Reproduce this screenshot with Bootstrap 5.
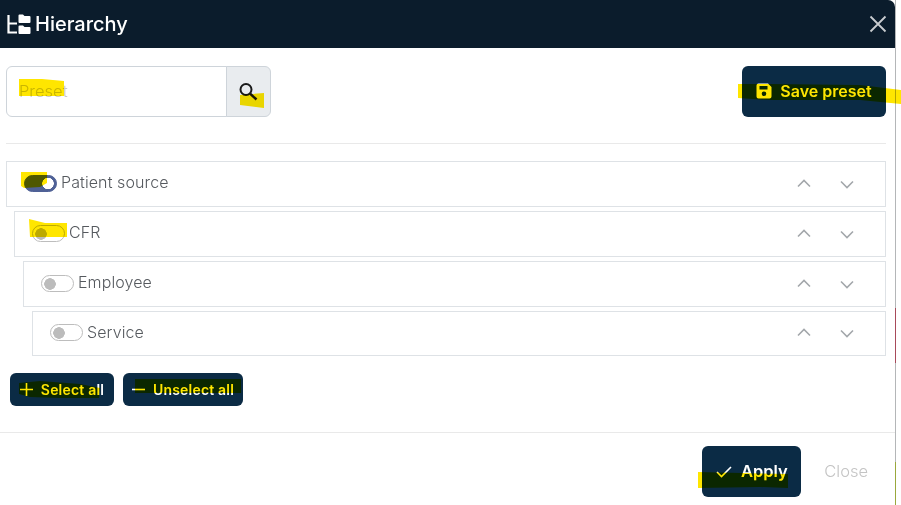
<!DOCTYPE html>
<html lang="en">
<head>
  <title>Hierarchy</title>
  <meta charset="utf-8">
  <meta name="viewport" content="width=device-width, initial-scale=1">
  <link href="https://cdn.jsdelivr.net/npm/bootstrap@5.3.3/dist/css/bootstrap.min.css" rel="stylesheet">
  <script src="https://cdn.jsdelivr.net/npm/bootstrap@5.3.3/dist/js/bootstrap.bundle.min.js"></script>
  <style>
    html, body { height: 505px; overflow: hidden; background: #fff; }
    body { font-family: Inter, "Liberation Sans", sans-serif; color: #55595e; position: relative; }
    .hier-window { width: 896px; height: 505px; border-right: 1px solid #b4b6b8; }
    .hier-edge-red { position: absolute; left: 895px; top: 308px; width: 1px; height: 55px; background: #a84a5a; }
    .hier-edge-green { position: absolute; left: 895px; top: 462px; width: 1px; height: 43px; background: #9aa83c; }
    .hier-head { height: 48px; background: #0b1c2c; padding: 0 8px 0 6px; border-top-right-radius: 7px; }
    .hier-title { font-size: 20px; font-weight: 500; color: #fff; line-height: 1; }
    .hier-close { width: 18px; height: 18px; background: none; border: 0; padding: 0; }
    .hier-top { padding: 18px 9px 0 6px; }
    .hier-search { width: 265px; height: 51px; }
    .hier-search .form-control { font-size: 16.500px; font-weight: 300; padding-left: 12px; border-color: #ced4da; border-radius: 6px 0 0 6px; }
    .hier-search .form-control::placeholder { color: #c9c9c9; }
    .hier-search .input-group-text { width: 45px; justify-content: center; background: #e9ecef; border-color: #ced4da; border-radius: 0 6px 6px 0; padding: 0; }
    .hier-btn { background: #0b2b45; color: #fff; font-weight: 600; border: 0; border-radius: 6px; display: flex; align-items: center; justify-content: center; }
    .hier-btn:hover { background: #0b2b45; color: #fff; }
    .hier-save { width: 144px; height: 51px; font-size: 16px; gap: 8px; padding: 0 0 2px; }
    .hier-sep { margin: 26px 9px 17px 6px; border-color: #e9e9e9; opacity: 1; }
    .hier-rows { padding-right: 9px; }
    .hier-row { height: 46px; margin-bottom: 4px; border: 1px solid #dee2e6; padding: 0 31px 0 17px; }
    .hier-row:last-child { height: 45px; margin-bottom: 0; }
    .hier-l1 { margin-left: 6px; }
    .hier-l2 { margin-left: 14px; }
    .hier-l3 { margin-left: 23px; }
    .hier-l4 { margin-left: 32px; }
    .hier-row .form-check-input { width: 33px; height: 17px; margin: 0 4px 2px 0; float: none; border-color: #bdbdbd; background-color: #fff; box-shadow: none; flex: none; }
    .hier-row .form-check-input { background-image: radial-gradient(circle at 8px 8px, #bcbcbc 5.5px, transparent 6px); background-size: auto; background-position: 0 0; }
    .hier-row .form-check-input:checked { background-color: #4f6196; border-color: #4f6196; background-image: radial-gradient(circle at 23px 7.5px, #fff 5.5px, transparent 6px); }
    .hier-label { font-size: 16px; font-weight: 300; color: #55595e; line-height: 1; letter-spacing: .1px; margin-bottom: 4px; }
    .hier-arrows { gap: 29px; }
    .hier-arrow-up { margin-bottom: 2px; }
    .hier-small { height: 33px; font-size: 14px; letter-spacing: .2px; gap: 8px; }
    .hier-all { width: 104px; }
    .hier-none { width: 120px; }
    .hier-actions { margin: 17px 0 0 10px; gap: 9px; }
    .hier-foot { margin-top: 26px; border-top: 1px solid #e9e9e9; padding: 13px 27px 0 0; }
    .hier-apply { width: 99px; height: 51px; font-size: 16.500px; gap: 9px; }
    .hier-closetext { font-size: 16.500px; font-weight: 300; color: #c4c4c4; margin-left: 23px; background: none; border: 0; padding: 0; }
    .hier-marker { position: absolute; left: 0; top: 0; mix-blend-mode: multiply; pointer-events: none; }
  </style>
</head>
<body>

  <div class="hier-window">
    <!-- Header -->
    <div class="hier-head d-flex align-items-center justify-content-between">
      <div class="d-flex align-items-center gap-1">
        <svg width="25" height="21" viewBox="0 0 25 21">
          <path d="M2.500 1v17.500h8.500M2.500 9.500h8.500" fill="none" stroke="#fff" stroke-width="2.200"/>
          <path d="M12.500 1.500a1 1 0 0 1 1-1h3.500l1.500 1.500h5a1 1 0 0 1 1 1v5a1 1 0 0 1-1 1h-10a1 1 0 0 1-1-1zM12.500 12.500a1 1 0 0 1 1-1h3.500l1.500 1.500h5a1 1 0 0 1 1 1v5a1 1 0 0 1-1 1h-10a1 1 0 0 1-1-1z" fill="#fff"/>
        </svg>
        <span class="hier-title">Hierarchy</span>
      </div>
      <button class="hier-close d-flex" type="button" aria-label="Close">
        <svg width="18" height="18" viewBox="0 0 18 18"><path d="M1.500 1.500l15 15M16.500 1.500l-15 15" stroke="#c9ccd0" stroke-width="1.800" fill="none"/></svg>
      </button>
    </div>

    <!-- Preset search -->
    <div class="hier-top d-flex justify-content-between">
      <div class="input-group hier-search">
        <input type="text" class="form-control" placeholder="Preset">
        <span class="input-group-text">
          <svg width="19" height="18" viewBox="0 0 19 18"><circle cx="7" cy="6.500" r="5.500" fill="none" stroke="#1a1a1a" stroke-width="2"/><path d="M11 10.500l6.500 6" stroke="#1a1a1a" stroke-width="2.400" fill="none"/></svg>
        </span>
      </div>
      <button class="btn hier-btn hier-save" type="button">
        <svg width="16" height="16" viewBox="0 0 16 16"><path fill-rule="evenodd" d="M2.500 0.500h9.500l3.500 3.500v9.500a2 2 0 0 1-2 2h-11a2 2 0 0 1-2-2v-11a2 2 0 0 1 2-2zM3.500 3v3.500h8V3zM8 8.500a2.300 2.300 0 1 0 0 4.600a2.300 2.300 0 0 0 0-4.600z" fill="#fff"/></svg>
        Save preset
      </button>
    </div>

    <hr class="hier-sep">

    <!-- Levels -->
    <div class="hier-rows">
      <div class="hier-row hier-l1 d-flex align-items-center justify-content-between">
        <div class="form-switch d-flex align-items-center p-0"><input class="form-check-input" type="checkbox" checked><span class="hier-label">Patient source</span></div>
        <div class="hier-arrows d-flex align-items-center">
          <svg class="hier-arrow-up" width="14" height="9" viewBox="0 0 14 9"><path d="M1 7.500l6-6 6 6" fill="none" stroke="#a3a7ab" stroke-width="1.600"/></svg>
          <svg width="14" height="9" viewBox="0 0 14 9"><path d="M1 1.500l6 6 6-6" fill="none" stroke="#a3a7ab" stroke-width="1.600"/></svg>
        </div>
      </div>
      <div class="hier-row hier-l2 d-flex align-items-center justify-content-between">
        <div class="form-switch d-flex align-items-center p-0"><input class="form-check-input" type="checkbox"><span class="hier-label">CFR</span></div>
        <div class="hier-arrows d-flex align-items-center">
          <svg class="hier-arrow-up" width="14" height="9" viewBox="0 0 14 9"><path d="M1 7.500l6-6 6 6" fill="none" stroke="#a3a7ab" stroke-width="1.600"/></svg>
          <svg width="14" height="9" viewBox="0 0 14 9"><path d="M1 1.500l6 6 6-6" fill="none" stroke="#a3a7ab" stroke-width="1.600"/></svg>
        </div>
      </div>
      <div class="hier-row hier-l3 d-flex align-items-center justify-content-between">
        <div class="form-switch d-flex align-items-center p-0"><input class="form-check-input" type="checkbox"><span class="hier-label">Employee</span></div>
        <div class="hier-arrows d-flex align-items-center">
          <svg class="hier-arrow-up" width="14" height="9" viewBox="0 0 14 9"><path d="M1 7.500l6-6 6 6" fill="none" stroke="#a3a7ab" stroke-width="1.600"/></svg>
          <svg width="14" height="9" viewBox="0 0 14 9"><path d="M1 1.500l6 6 6-6" fill="none" stroke="#a3a7ab" stroke-width="1.600"/></svg>
        </div>
      </div>
      <div class="hier-row hier-l4 d-flex align-items-center justify-content-between">
        <div class="form-switch d-flex align-items-center p-0"><input class="form-check-input" type="checkbox"><span class="hier-label">Service</span></div>
        <div class="hier-arrows d-flex align-items-center">
          <svg class="hier-arrow-up" width="14" height="9" viewBox="0 0 14 9"><path d="M1 7.500l6-6 6 6" fill="none" stroke="#a3a7ab" stroke-width="1.600"/></svg>
          <svg width="14" height="9" viewBox="0 0 14 9"><path d="M1 1.500l6 6 6-6" fill="none" stroke="#a3a7ab" stroke-width="1.600"/></svg>
        </div>
      </div>
    </div>

    <div class="hier-actions d-flex">
      <button class="btn hier-btn hier-small hier-all p-0" type="button">
        <svg width="13" height="13" viewBox="0 0 13 13"><path d="M6.500 0v13M0 6.500h13" stroke="#fff" stroke-width="1.600"/></svg>
        Select all
      </button>
      <button class="btn hier-btn hier-small hier-none p-0" type="button">
        <svg width="13" height="13" viewBox="0 0 13 13"><path d="M0 6.500h13" stroke="#fff" stroke-width="1.600"/></svg>
        Unselect all
      </button>
    </div>

    <!-- Footer -->
    <div class="hier-foot d-flex justify-content-end align-items-center">
      <button class="btn hier-btn hier-apply p-0" type="button">
        <svg width="16" height="12" viewBox="0 0 16 12"><path d="M1 6l4.500 4.500L15 1" fill="none" stroke="#fff" stroke-width="1.600"/></svg>
        Apply
      </button>
      <button class="hier-closetext" type="button">Close</button>
    </div>
  </div>
  <div class="hier-edge-red"></div>
  <div class="hier-edge-green"></div>

  <!-- Yellow marker strokes drawn over the screenshot -->
  <svg class="hier-marker" width="901" height="505" viewBox="0 0 901 505">
    <g fill="#ffe600">
      <polygon points="19,79 42,79 64,81 64,96 19,96"/>
      <polygon points="240,95 264,93 264,108 240,105"/>
      <polygon points="738,84 770,84 860,85 901,90 901,104 860,100 770,100 738,98"/>
      <polygon points="21,172 47,172 47,183 40,187 24,188 21,186"/>
      <polygon points="29,219 45,223 67,223 67,237 30,237"/>
      <polygon points="19,383 40,381 80,384 100,388 99,398 60,398 30,397 19,394"/>
      <polygon points="135,379 241,379 241,393 135,393"/>
      <polygon points="698,472 788,474 788,488 760,487 698,488"/>
    </g>
  </svg>

</body>
</html>
